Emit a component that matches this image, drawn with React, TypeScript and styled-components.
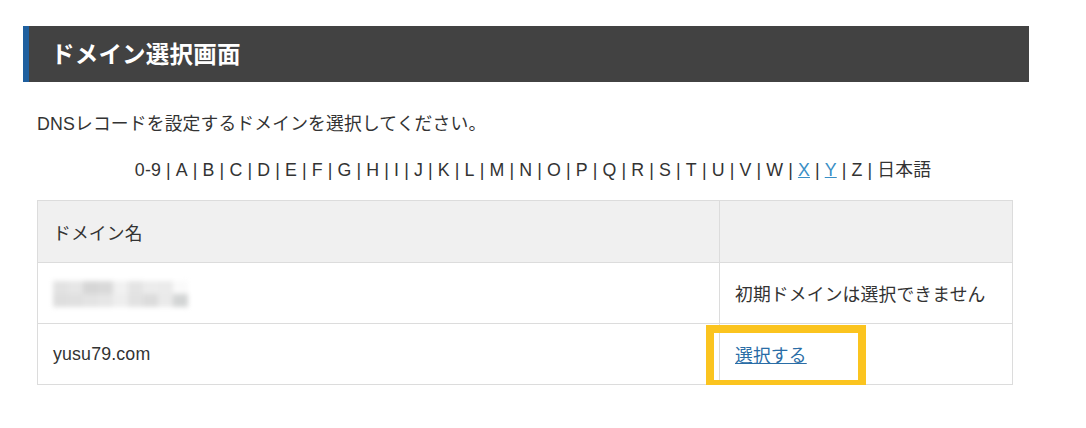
import styled, { createGlobalStyle } from 'styled-components';

const GlobalStyle = createGlobalStyle`
  body {
    margin: 0;
    background: #fff;
    font-family: "Liberation Sans", "Noto Sans CJK JP", sans-serif;
    color: #333;
  }
`;

const letters = [
  '0-9', 'A', 'B', 'C', 'D', 'E', 'F', 'G', 'H', 'I', 'J', 'K', 'L', 'M',
  'N', 'O', 'P', 'Q', 'R', 'S', 'T', 'U', 'V', 'W', 'X', 'Y', 'Z', '日本語'
];
const linked = ['X', 'Y'];

const mosaic = [
  ['#e2e2e2', '#e6e6e6', '#d6d6d6', '#d9d9d9', '#f1f1f1', '#e4e4e4', '#ececec', '#ebebeb', '#fafafa'],
  ['#dedede', '#e0e0e0', '#e3e3e3', '#e6e6e6', '#eeeeee', '#e2e2e2', '#dcdcdc', '#eaeaea', '#d3d5d5']
];

export default function App() {
  return (
    <Page>
      <GlobalStyle />
      <TitleBar>ドメイン選択画面</TitleBar>
      <Content>
        <Intro>DNSレコードを設定するドメインを選択してください。</Intro>
        <IndexNav>
          {letters.map((l, i) => (
            <span key={l}>
              {linked.includes(l) ? <IndexLink href="#">{l}</IndexLink> : l}
              {i < letters.length - 1 && <Sep>|</Sep>}
            </span>
          ))}
        </IndexNav>
        <DomainTable>
          <thead>
            <tr>
              <HeadCell>ドメイン名</HeadCell>
              <HeadCell />
            </tr>
          </thead>
          <tbody>
            <tr>
              <Cell>
                <Mosaic>
                  {mosaic.flat().map((c, i) => (
                    <span key={i} style={{ background: c }} />
                  ))}
                </Mosaic>
              </Cell>
              <Cell>初期ドメインは選択できません</Cell>
            </tr>
            <tr>
              <Cell>yusu79.com</Cell>
              <ActionCell>
                <SelectLink href="#">選択する</SelectLink>
                <Highlight />
              </ActionCell>
            </tr>
          </tbody>
        </DomainTable>
      </Content>
    </Page>
  );
}

const Page = styled.div`
  width: 1006px;
  padding: 26px 0 0 23px;
`;

const TitleBar = styled.h1`
  margin: 0;
  height: 56px;
  box-sizing: border-box;
  display: flex;
  align-items: center;
  padding: 0 0 3px 22px;
  background: #424242;
  border-left: 6px solid #1f5f9e;
  color: #fff;
  font-size: 23.5px;
  font-weight: bold;
  letter-spacing: 0.2px;
`;

const Content = styled.div`
  padding: 0 0 0 14px;
  font-size: 17.8px;
  letter-spacing: 0.15px;
`;

const Intro = styled.p`
  margin: 30px 0 0;
  line-height: 24px;
`;

const IndexNav = styled.div`
  margin-top: 22px;
  width: 992px;
  text-align: center;
  line-height: 24px;
`;

const Sep = styled.span`
  margin: 0 5px;
`;

const IndexLink = styled.a`
  color: #3a8fc6;
  text-decoration: underline;
`;

const DomainTable = styled.table`
  margin-top: 18px;
  width: 976px;
  border-collapse: collapse;
`;

const HeadCell = styled.th`
  height: 61px;
  padding: 0 15px;
  background: #f0f0f0;
  border: 1px solid #dcdcdc;
  text-align: left;
  font-weight: normal;
  &:first-child {
    width: 651px;
  }
`;

const Cell = styled.td`
  height: 60px;
  padding: 0 15px;
  border: 1px solid #dcdcdc;
  vertical-align: middle;
`;

const ActionCell = styled(Cell)`
  position: relative;
`;

const SelectLink = styled.a`
  color: #2a6da6;
  text-decoration: underline;
`;

const Highlight = styled.div`
  position: absolute;
  left: -14px;
  top: 1px;
  width: 160px;
  height: 63px;
  box-sizing: border-box;
  border: 8px solid #fbc41f;
  pointer-events: none;
`;

const Mosaic = styled.div`
  display: grid;
  grid-template-columns: repeat(9, 15px);
  grid-auto-rows: 13px;
  width: 135px;
  margin-top: 2px;
  filter: blur(2.5px);
  span {
    display: block;
  }
`;
